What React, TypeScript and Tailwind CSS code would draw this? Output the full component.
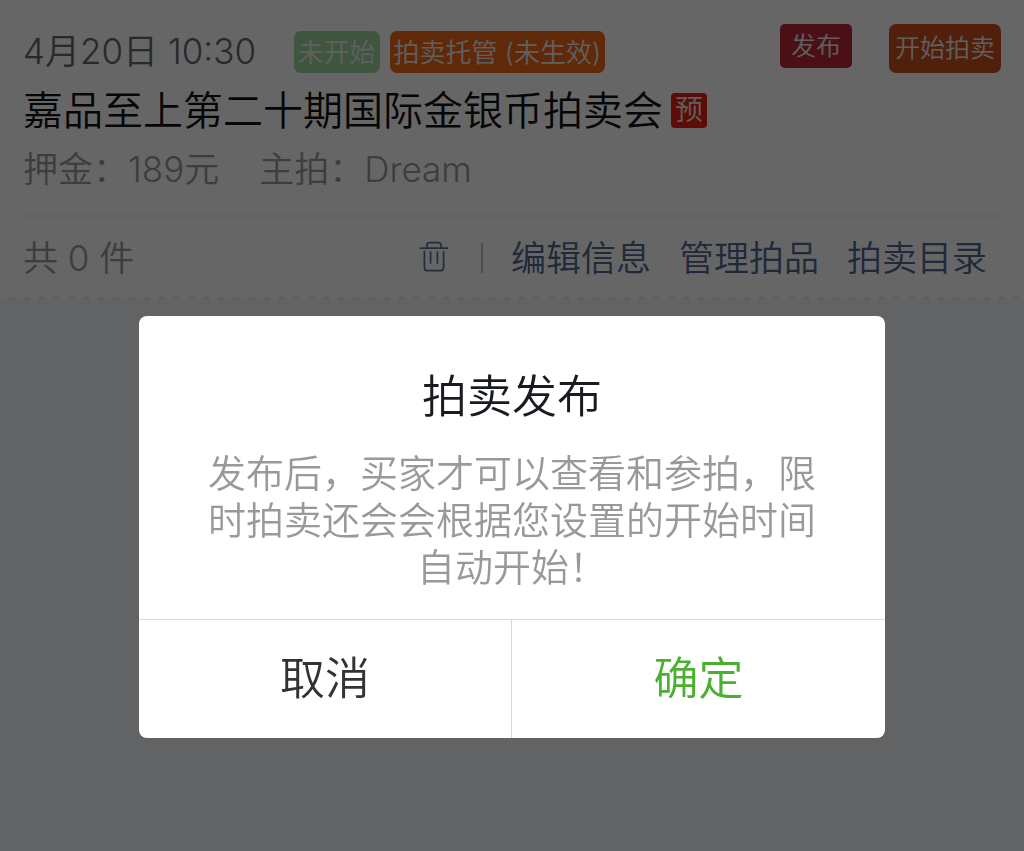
function TrashIcon() {
  return (
    <svg viewBox="0 0 30 32" className="h-8 w-[30px]" fill="none" stroke="#5a6e9c" strokeWidth="1.7" strokeLinecap="round" strokeLinejoin="round" aria-hidden="true">
      <path d="M1.5 7.2H28.5" />
      <path d="M8 7V4.2Q8 1.7 10.5 1.7H19.5Q22 1.7 22 4.2V7" />
      <path d="M5.4 10.5V26.4Q5.4 29.7 8.7 29.7H21.3Q24.6 29.7 24.6 26.4V10.5" />
      <path d="M11.6 11V22M18.4 11V22" />
    </svg>
  );
}

const links = ["编辑信息", "管理拍品", "拍卖目录"];

export default function App() {
  return (
    <div className="min-h-screen bg-[#f5f8fb] font-['Inter','Noto_Sans_CJK_SC',sans-serif] font-[350]">
      <section className="bg-white">
        <div className="px-[23px] pt-6">
          <div className="flex items-start">
            <time className="mt-[6px] text-[35px] leading-[42px] whitespace-nowrap text-[#666666]">4月20日 10:30</time>
            <div className="mt-[7px] ml-auto flex gap-[10px] pl-4 text-[26px] leading-[44px] whitespace-nowrap text-[#eeeeee]">
              <span className="h-[42px] rounded-[7px] bg-[#9cd69b] px-1">未开始</span>
              <span className="h-[42px] rounded-[7px] bg-[#f06818] px-1">拍卖托管 (未生效)</span>
            </div>
            <div className="ml-[175px] flex items-start gap-[37px] text-[25px] whitespace-nowrap text-[#eeeeee]">
              <button type="button" className="h-11 rounded-[5px] bg-[#b82838] px-[11px] leading-[42px]">发布</button>
              <button type="button" className="h-[49px] rounded-[7px] bg-[#c85020] px-[6px] leading-[49px]">开始拍卖</button>
            </div>
          </div>
          <div className="mt-[9px] flex items-center gap-2">
            <h1 className="text-[40px] leading-[58px] whitespace-nowrap text-[#111111]">嘉品至上第二十期国际金银币拍卖会</h1>
            <span className="mb-[2px] rounded-[4px] bg-[#e81e10] px-1 text-[28px] leading-[35px] text-[#eeeeee]">预</span>
          </div>
          <div className="flex gap-10 pb-[17px] text-[35px] leading-[58px] whitespace-nowrap text-[#999999]">
            <span>押金：189元</span>
            <span>主拍：Dream</span>
          </div>
          <div className="flex items-center border-t-2 border-[#f5f5f5] pt-[2px] pr-[14px] text-[35px] leading-[78px] whitespace-nowrap">
            <span className="text-[#999999]">共 0 件</span>
            <div className="ml-auto flex items-center gap-7">
              <button type="button" aria-label="删除" className="mr-1 pb-[2px]">
                <TrashIcon />
              </button>
              <span className="h-[30px] w-[2px] bg-[#bbbbbb]" />
              {links.map((label) => (
                <a key={label} href="#" className="text-[#526690]">{label}</a>
              ))}
            </div>
          </div>
        </div>
        <div className="h-[3px] bg-[repeating-linear-gradient(90deg,#ffffff_0px,#ffffff_8px,#ededed_8px,#ededed_15px)]" />
      </section>

      <div className="fixed inset-0 flex items-start justify-center bg-black/60 pt-[316px]">
        <div role="dialog" aria-modal="true" aria-labelledby="dialog-title" className="w-[73%] max-w-[746px] overflow-hidden rounded-[8px] bg-white text-center">
          <div className="px-[68px] pt-12 pb-7">
            <h2 id="dialog-title" className="text-[45px] leading-[66px] text-[#181c20]">拍卖发布</h2>
            <p className="mt-5 text-[38px] leading-[47px] text-[#999999]">
              发布后，买家才可以查看和参拍，限时拍卖还会会根据您设置的开始时间自动开始！
            </p>
          </div>
          <div className="grid grid-cols-2 divide-x divide-[#d8d8d8] border-t border-[#d8d8d8] text-[45px] leading-[118px]">
            <button type="button" className="text-[#333333]">取消</button>
            <button type="button" className="text-[#4bb032]">确定</button>
          </div>
        </div>
      </div>
    </div>
  );
}
